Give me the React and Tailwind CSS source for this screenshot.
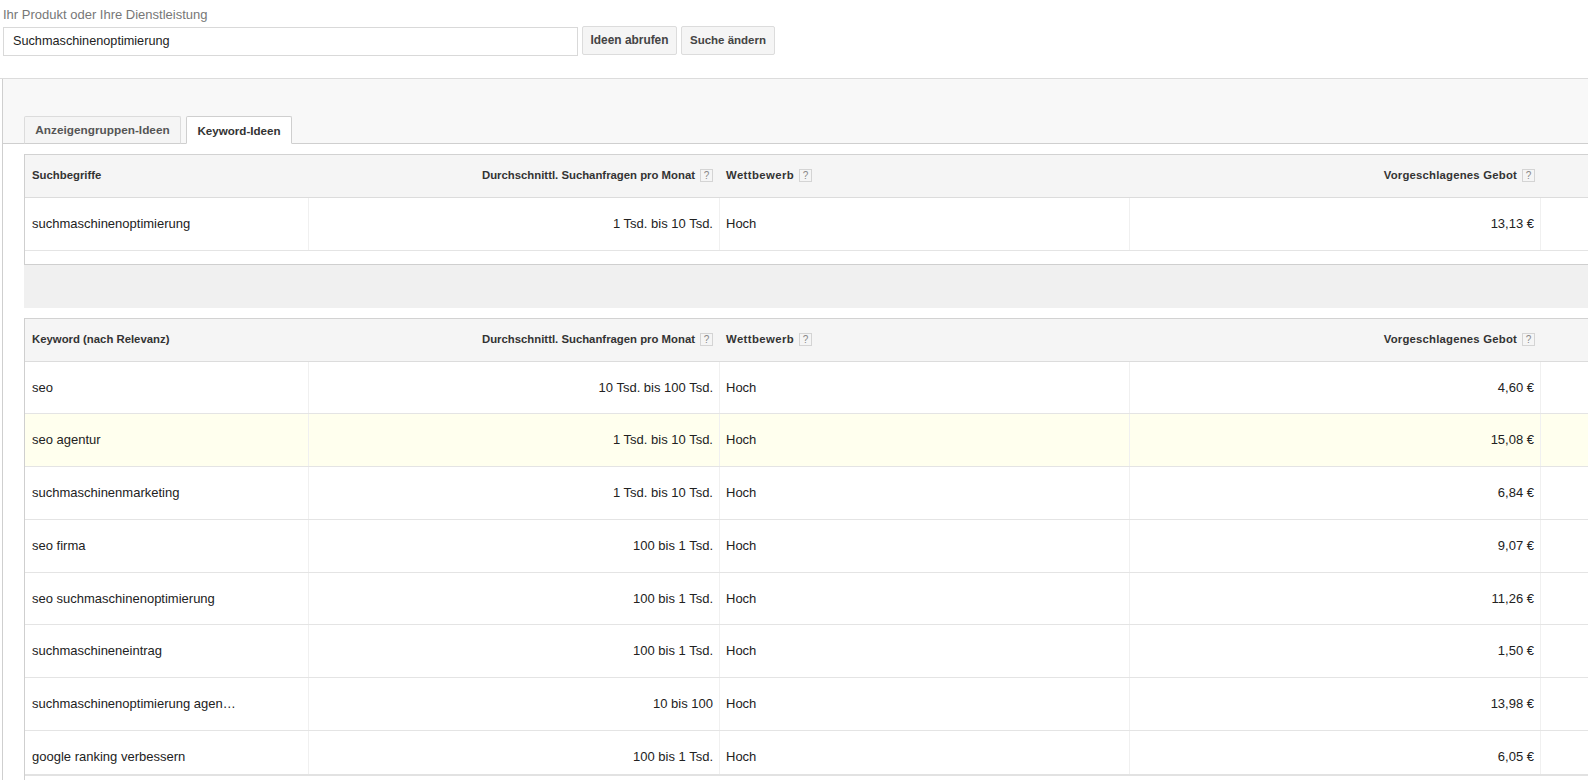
const gridCols = 'grid grid-cols-[284px_411px_410px_411px_1fr]'

const ideas = [
  { keyword: 'seo', volume: '10 Tsd. bis 100 Tsd.', bid: '4,60 €', height: 'h-[52px]' },
  { keyword: 'seo agentur', volume: '1 Tsd. bis 10 Tsd.', bid: '15,08 €', height: 'h-[53px]', highlight: true },
  { keyword: 'suchmaschinenmarketing', volume: '1 Tsd. bis 10 Tsd.', bid: '6,84 €', height: 'h-[53px]' },
  { keyword: 'seo firma', volume: '100 bis 1 Tsd.', bid: '9,07 €', height: 'h-[53px]' },
  { keyword: 'seo suchmaschinenoptimierung', volume: '100 bis 1 Tsd.', bid: '11,26 €', height: 'h-[52px]' },
  { keyword: 'suchmaschineneintrag', volume: '100 bis 1 Tsd.', bid: '1,50 €', height: 'h-[53px]' },
  { keyword: 'suchmaschinenoptimierung agen…', volume: '10 bis 100', bid: '13,98 €', height: 'h-[53px]' },
  { keyword: 'google ranking verbessern', volume: '100 bis 1 Tsd.', bid: '6,05 €', height: 'h-[53px]' },
]

const HelpIcon = () => (
  <span className="ml-[5px] flex h-[13px] w-[13px] shrink-0 items-center justify-center border border-[#d4d4d4] bg-[#f5f5f5] text-[10px] font-normal leading-none tracking-normal text-[#888]">
    ?
  </span>
)

const HeaderRow = ({ title }) => (
  <div className={`${gridCols} h-[44px] items-center border-t border-b border-[#d2d2d2] border-b-[#dcdcdc] bg-[#f5f5f5] text-[11.35px] font-bold text-[#333]`}>
    <div className="pl-[7px]">{title}</div>
    <div className="flex items-center justify-end pr-[7px]">
      Durchschnittl. Suchanfragen pro Monat
      <HelpIcon />
    </div>
    <div className="flex items-center pl-[6px] tracking-[0.4px]">
      Wettbewerb
      <HelpIcon />
    </div>
    <div className="flex items-center justify-end pr-[6px] tracking-[0.2px]">
      Vorgeschlagenes Gebot
      <HelpIcon />
    </div>
    <div />
  </div>
)

const Row = ({ keyword, volume, bid, height, highlight }) => (
  <div className={`${gridCols} ${height} border-b border-[#e4e4e4] text-[13px] text-[#222] ${highlight ? 'bg-[#ffffee]' : 'bg-white'}`}>
    <div className="flex items-center border-r border-[#f0f0f0] pl-[7px]">{keyword}</div>
    <div className="flex items-center justify-end border-r border-[#f0f0f0] pr-[6px]">{volume}</div>
    <div className="flex items-center border-r border-[#f0f0f0] pl-[6px]">Hoch</div>
    <div className="flex items-center justify-end border-r border-[#f0f0f0] pr-[6px]">{bid}</div>
    <div />
  </div>
)

export default function App() {
  return (
    <div className="h-[780px] w-[1588px] overflow-hidden bg-white font-['Liberation_Sans',Arial,sans-serif]">
      {/* Suchfeld */}
      <div className="h-[78px] pl-[3px]">
        <div className="h-[26px] pt-[7px] text-[13px] leading-[16px] text-[#777]">Ihr Produkt oder Ihre Dienstleistung</div>
        <div className="flex items-start">
          <div className="mt-px flex h-[29px] w-[575px] items-center border border-[#d9d9d9] pl-[9px] text-[12.7px] text-[#222]">
            Suchmaschinenoptimierung
          </div>
          <button type="button" className="ml-[4px] h-[29px] w-[95px] rounded-[2px] border border-[#dcdcdc] bg-[#f5f5f5] text-[11.9px] font-bold text-[#444]">
            Ideen abrufen
          </button>
          <button type="button" className="ml-[4px] h-[29px] w-[94px] rounded-[2px] border border-[#dcdcdc] bg-[#f5f5f5] text-[11.5px] font-bold text-[#444]">
            Suche ändern
          </button>
        </div>
      </div>

      <div className="h-[702px] border-t border-[#dcdcdc]">
        <div className="ml-[2px] h-full border-l border-[#cfcfcf]">
          {/* Tabs */}
          <div className="flex h-[65px] items-end gap-[5px] border-b border-[#cfcfcf] bg-[#f8f8f8] pl-[21px]">
            <div className="-mb-px flex h-[28px] w-[157px] items-center justify-center rounded-t-[2px] border border-[#dcdcdc] border-b-[#cfcfcf] bg-[#f5f5f5] pt-[2px] text-[11.8px] font-bold text-[#555]">
              Anzeigengruppen-Ideen
            </div>
            <div className="-mb-px flex h-[28px] w-[106px] items-center justify-center rounded-t-[2px] border border-[#cfcfcf] border-b-white bg-white pt-[2px] text-[11.6px] font-bold text-[#333]">
              Keyword-Ideen
            </div>
          </div>

          <div className="pl-[21px] pt-[10px]">
            {/* Suchbegriffe */}
            <div className="h-[111px] border-b border-l border-[#cfcfcf]">
              <HeaderRow title="Suchbegriffe" />
              <Row keyword="suchmaschinenoptimierung" volume="1 Tsd. bis 10 Tsd." bid="13,13 €" height="h-[53px]" />
            </div>

            <div className="h-[43px] bg-[#f0f0f0]" />

            {/* Keyword-Ideen */}
            <div className="relative mt-[10px] h-[470px] overflow-hidden border-l border-[#cfcfcf]">
              <HeaderRow title="Keyword (nach Relevanz)" />
              {ideas.map((idea) => (
                <Row key={idea.keyword} {...idea} />
              ))}
              {/* Linie am unteren Rand der scrollbaren Liste */}
              <div className="absolute inset-x-0 top-[456px] bottom-0 border-t-2 border-[#e2e2e2] bg-white" />
            </div>
          </div>
        </div>
      </div>
    </div>
  )
}
